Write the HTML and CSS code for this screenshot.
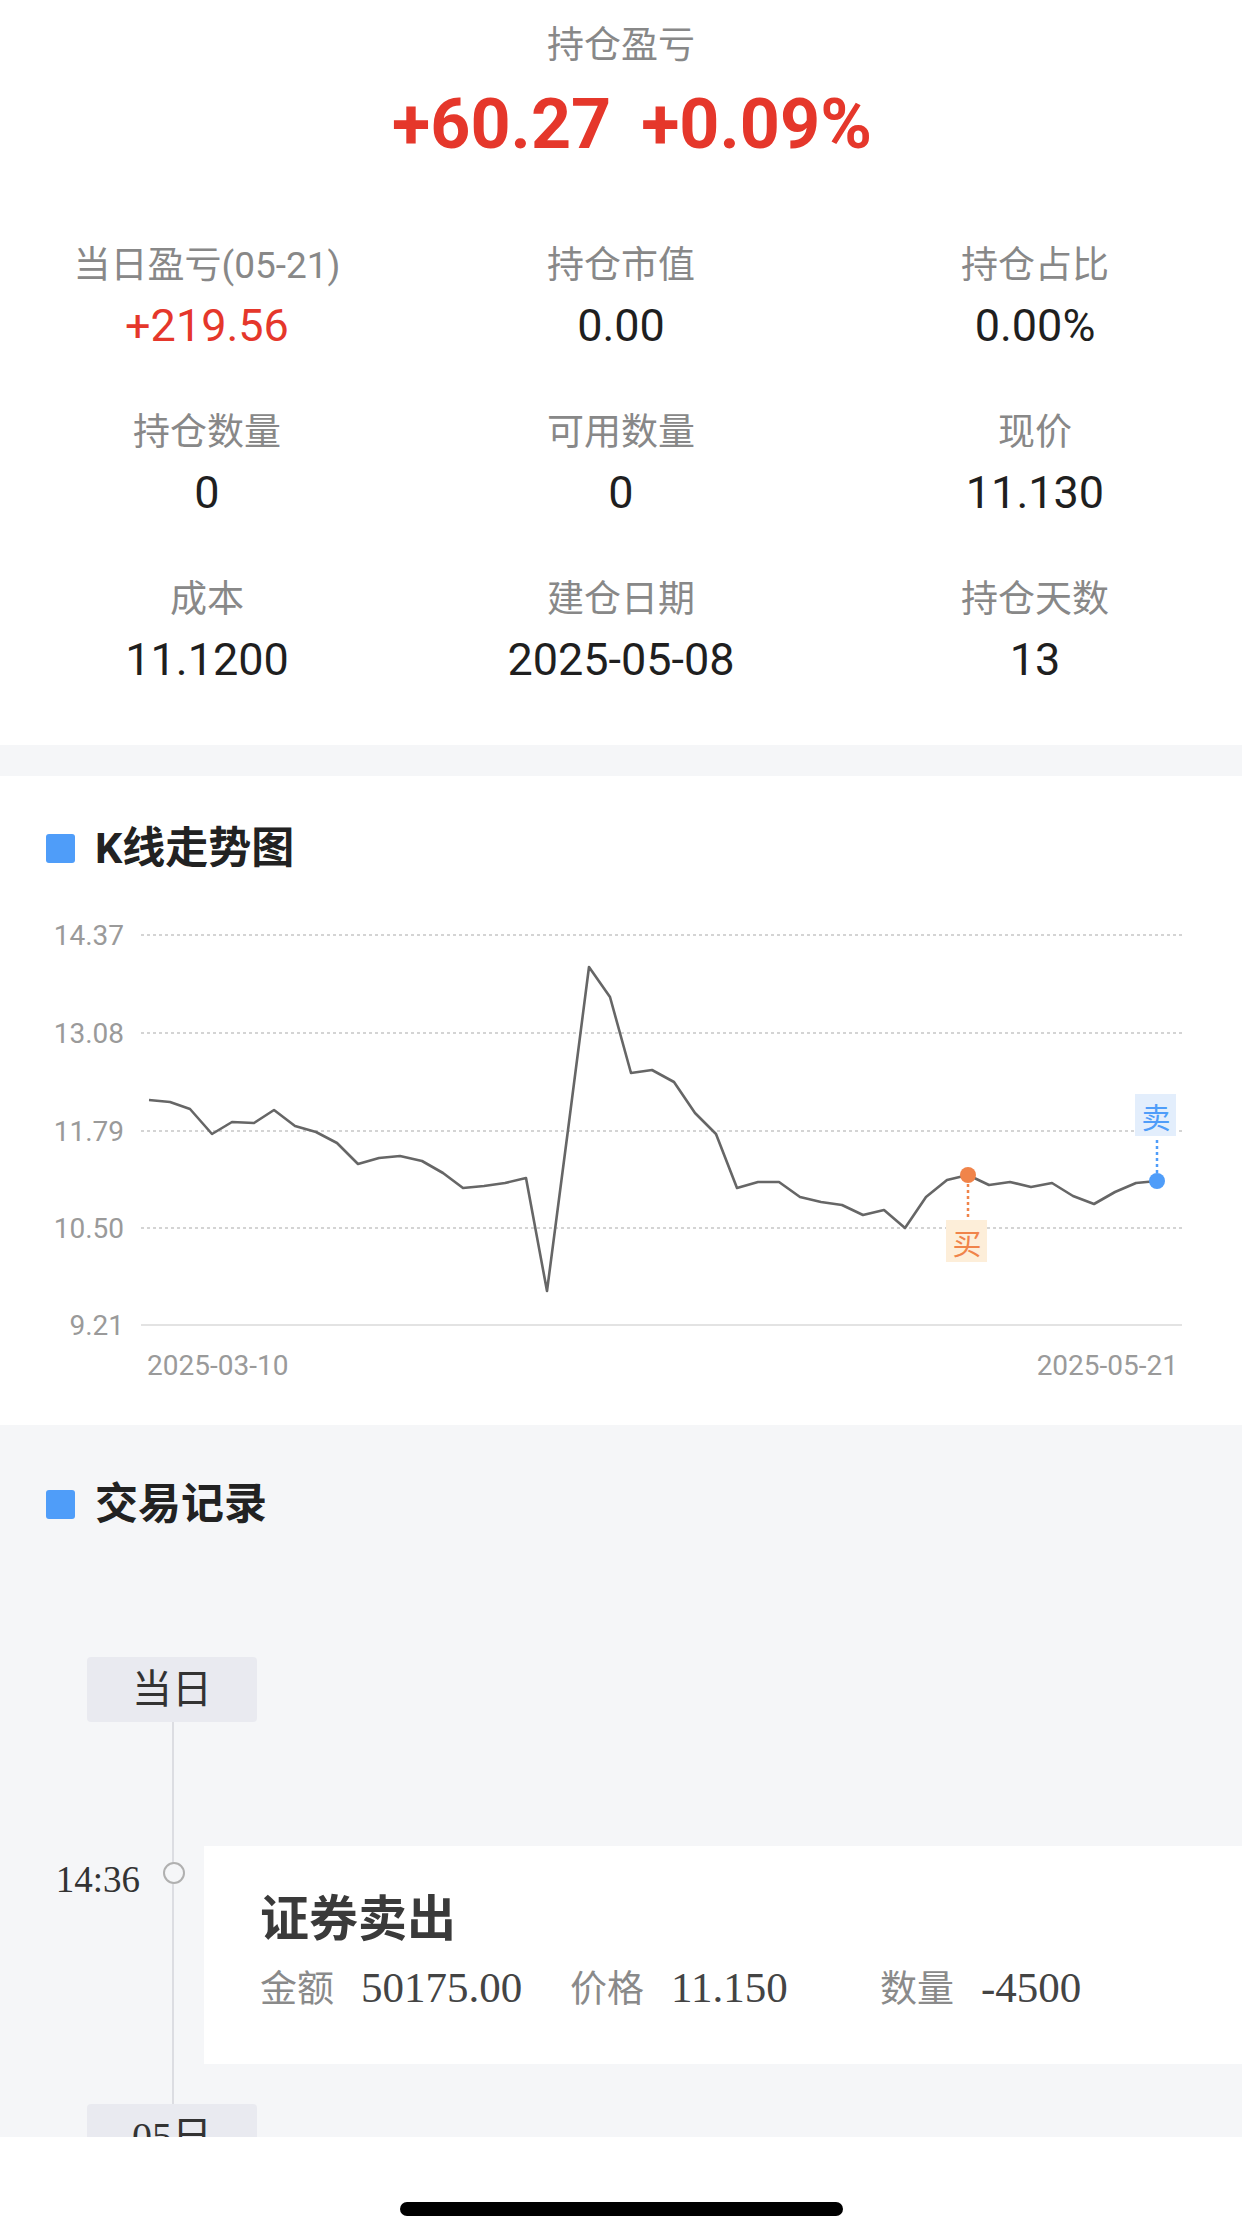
FILE: index.html
```html
<!DOCTYPE html>
<html>
<head>
  <meta charset="utf-8">
  <title>持仓详情</title>
  <link rel="stylesheet" href="styles.css">
</head>
<body>

  <div class="page">

    <section class="summary">
      <div class="summary-title">持仓盈亏</div>
      <div class="summary-value up">
        <span>+60.27</span>
        <span>+0.09%</span>
      </div>

      <div class="stats">
        <div class="stat">
          <div class="stat-label">当日盈亏(05-21)</div>
          <div class="stat-value up">+219.56</div>
        </div>
        <div class="stat">
          <div class="stat-label">持仓市值</div>
          <div class="stat-value">0.00</div>
        </div>
        <div class="stat">
          <div class="stat-label">持仓占比</div>
          <div class="stat-value">0.00%</div>
        </div>
        <div class="stat">
          <div class="stat-label">持仓数量</div>
          <div class="stat-value">0</div>
        </div>
        <div class="stat">
          <div class="stat-label">可用数量</div>
          <div class="stat-value">0</div>
        </div>
        <div class="stat">
          <div class="stat-label">现价</div>
          <div class="stat-value">11.130</div>
        </div>
        <div class="stat">
          <div class="stat-label">成本</div>
          <div class="stat-value">11.1200</div>
        </div>
        <div class="stat">
          <div class="stat-label">建仓日期</div>
          <div class="stat-value">2025-05-08</div>
        </div>
        <div class="stat">
          <div class="stat-label">持仓天数</div>
          <div class="stat-value">13</div>
        </div>
      </div>
    </section>

    <section class="panel chart-panel">
      <h2 class="panel-title"><span class="mark"></span>K线走势图</h2>

      <svg class="kline" width="1242" height="547" viewBox="0 0 1242 547">
        <!-- grid -->
        <g class="grid">
          <line x1="141" y1="57" x2="1182" y2="57"></line>
          <line x1="141" y1="155" x2="1182" y2="155"></line>
          <line x1="141" y1="253" x2="1182" y2="253"></line>
          <line x1="141" y1="350" x2="1182" y2="350"></line>
        </g>
        <line class="base" x1="141" y1="447" x2="1182" y2="447"></line>

        <g class="axis">
          <text x="124" y="57" text-anchor="end" dominant-baseline="central">14.37</text>
          <text x="124" y="155" text-anchor="end" dominant-baseline="central">13.08</text>
          <text x="124" y="253" text-anchor="end" dominant-baseline="central">11.79</text>
          <text x="124" y="350" text-anchor="end" dominant-baseline="central">10.50</text>
          <text x="124" y="447" text-anchor="end" dominant-baseline="central">9.21</text>
          <text x="147" y="487" dominant-baseline="central">2025-03-10</text>
          <text x="1178" y="487" text-anchor="end" dominant-baseline="central">2025-05-21</text>
        </g>

        <polyline class="price" points="149,222 170,224 190,231 212,256 232,244 254,245 274,232 295,248 316,254 337,265 358,286 379,280 400,278 422,283 443,295 463,310 484,308 505,305 526,300 547,413 568,252 589,89 610,119 631,195 652,192 674,204 695,235 716,256 737,310 758,304 779,304 800,319 821,324 842,327 863,337 884,332 905,350 926,319 947,302 968,297 989,307 1010,304 1031,309 1052,305 1073,318 1094,326 1115,314 1136,305 1157,303"></polyline>

        <!-- buy -->
        <line class="buy-stem" x1="968" y1="306" x2="968" y2="340"></line>
        <circle class="buy-dot" cx="968" cy="297" r="8"></circle>
        <rect class="buy-tag" x="946" y="342" width="41" height="42"></rect>
        <text class="buy-text" x="967" y="364" text-anchor="middle" dominant-baseline="central">买</text>

        <!-- sell -->
        <line class="sell-stem" x1="1157" y1="262" x2="1157" y2="295"></line>
        <circle class="sell-dot" cx="1157" cy="303" r="8"></circle>
        <rect class="sell-tag" x="1135" y="216" width="41" height="42"></rect>
        <text class="sell-text" x="1156" y="238" text-anchor="middle" dominant-baseline="central">卖</text>
      </svg>
    </section>

    <section class="panel trades">
      <h2 class="panel-title"><span class="mark"></span>交易记录</h2>

      <div class="timeline">
        <div class="day-tag">当日</div>

        <div class="entry">
          <div class="entry-time">14:36</div>
          <div class="entry-node"><span class="dot"></span></div>
          <div class="entry-card">
            <div class="entry-title">证券卖出</div>
            <div class="entry-fields">
              <span class="field"><span class="field-label">金额</span><span class="field-value">50175.00</span></span>
              <span class="field"><span class="field-label">价格</span><span class="field-value">11.150</span></span>
              <span class="field"><span class="field-label">数量</span><span class="field-value">-4500</span></span>
            </div>
          </div>
        </div>

        <div class="day-tag">05日</div>
      </div>
    </section>

  </div>

  <div class="home-area"><span class="home-bar"></span></div>

</body>
</html>
```

FILE: styles.css
```css
body {
  margin: 0;
  height: 2240px;
  display: flex;
  flex-direction: column;
  font-family: Roboto, "Noto Sans CJK SC", sans-serif;
  background: #fff;
}

.page {
  flex: 1;
  overflow: hidden;
  background: #f5f6f8;
}

.up {
  color: #e5372b;
}

/* summary */

.summary {
  background: #fff;
  padding: 20px 0 55px;
  text-align: center;
}

.summary-title {
  font-size: 37px;
  line-height: 52px;
  color: #888;
}

.summary-value {
  display: flex;
  justify-content: center;
  gap: 30px;
  padding-left: 22px;
  font-size: 70px;
  line-height: 104px;
  font-weight: 700;
}

.stats {
  display: grid;
  grid-template-columns: repeat(3, 1fr);
  row-gap: 52px;
  padding-top: 65px;
}

.stat-label {
  font-size: 37px;
  line-height: 50px;
  color: #888;
}

.stat-value {
  margin-top: 5px;
  font-size: 45px;
  line-height: 60px;
  color: #1f1f1f;
}

.stat-value.up {
  color: #e5372b;
}

/* panels */

.panel-title {
  margin: 0;
  display: flex;
  align-items: center;
  gap: 20px;
  padding-left: 46px;
  font-size: 43px;
  line-height: 60px;
  font-weight: 700;
  color: #222;
}

.mark {
  width: 29px;
  height: 29px;
  border-radius: 3px;
  background: #4f9df9;
}

.chart-panel {
  margin-top: 31px;
  padding-top: 42px;
  background: #fff;
}

.kline {
  display: block;
}

.grid line {
  stroke: #d4d4d4;
  stroke-width: 2;
  stroke-dasharray: 3 3;
}

.base {
  stroke: #e3e3e3;
  stroke-width: 2;
}

.axis text {
  font-family: Roboto, sans-serif;
  font-size: 28px;
  fill: #9a9a9a;
}

.price {
  fill: none;
  stroke: #666;
  stroke-width: 2.6;
  stroke-linejoin: round;
}

.buy-stem {
  stroke: #f0844a;
  stroke-width: 2.5;
  stroke-dasharray: 3 3;
}

.buy-dot {
  fill: #f0844a;
}

.buy-tag {
  fill: #fdeed9;
}

.buy-text {
  font-family: "Noto Sans CJK SC", sans-serif;
  font-size: 29px;
  fill: #f0844a;
}

.sell-stem {
  stroke: #4f9df9;
  stroke-width: 2.5;
  stroke-dasharray: 3 3;
}

.sell-dot {
  fill: #4f9df9;
}

.sell-tag {
  fill: #e3eefc;
}

.sell-text {
  font-family: "Noto Sans CJK SC", sans-serif;
  font-size: 29px;
  fill: #4f9df9;
}

/* trades */

.trades {
  padding-top: 49px;
}

.timeline {
  position: relative;
  margin-top: 123px;
  font-family: "Liberation Serif", "Noto Sans CJK SC", serif;
}

.timeline::before {
  content: "";
  position: absolute;
  left: 172px;
  top: 60px;
  bottom: 0;
  width: 2px;
  background: #dcdde2;
}

.day-tag {
  position: relative;
  width: 170px;
  height: 65px;
  margin-left: 87px;
  border-radius: 4px;
  background: #e9eaf0;
  text-align: center;
  font-size: 40px;
  line-height: 65px;
  color: #333;
}

.entry + .day-tag {
  margin-top: 40px;
}

.entry {
  display: grid;
  grid-template-columns: 152px 44px 1fr;
  margin-top: 124px;
}

.entry-time {
  margin-top: 14px;
  padding-right: 12px;
  text-align: right;
  font-size: 37px;
  line-height: 40px;
  color: #333;
}

.entry-node {
  display: flex;
  justify-content: center;
  padding-top: 16px;
}

.dot {
  position: relative;
  width: 18px;
  height: 18px;
  border: 2.5px solid #b0b0b0;
  border-radius: 50%;
  background: #f5f6f8;
}

.entry-card {
  margin-left: 8px;
  height: 218px;
  box-sizing: border-box;
  padding: 39px 0 0 56px;
  background: #fff;
}

.entry-title {
  font-family: "Noto Sans CJK SC", sans-serif;
  font-size: 49px;
  line-height: 60px;
  font-weight: 700;
  color: #3a3a3a;
}

.entry-fields {
  display: flex;
  margin-top: 16px;
  line-height: 50px;
}

.field {
  display: flex;
  align-items: baseline;
  gap: 27px;
  width: 310px;
}

.field-label {
  font-family: "Noto Sans CJK SC", sans-serif;
  font-size: 37px;
  color: #8a8a8a;
}

.field-value {
  font-size: 43px;
  color: #444;
}

/* bottom */

.home-area {
  height: 103px;
  box-sizing: border-box;
  padding-top: 65px;
  background: #fff;
}

.home-bar {
  display: block;
  width: 443px;
  height: 14px;
  margin: 0 auto;
  border-radius: 7px;
  background: #000;
}
```
